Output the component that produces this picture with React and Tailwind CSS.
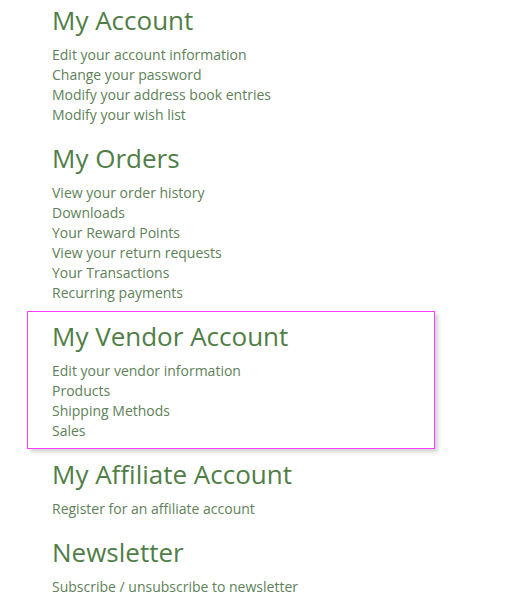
import React from 'react';

const sections = [
  {
    title: 'My Account',
    links: [
      'Edit your account information',
      'Change your password',
      'Modify your address book entries',
      'Modify your wish list',
    ],
  },
  {
    title: 'My Orders',
    links: [
      'View your order history',
      'Downloads',
      'Your Reward Points',
      'View your return requests',
      'Your Transactions',
      'Recurring payments',
    ],
  },
  {
    title: 'My Vendor Account',
    highlight: true,
    links: ['Edit your vendor information', 'Products', 'Shipping Methods', 'Sales'],
  },
  {
    title: 'My Affiliate Account',
    links: ['Register for an affiliate account'],
  },
  {
    title: 'Newsletter',
    links: ['Subscribe / unsubscribe to newsletter'],
  },
];

const Section = ({ section, first }) => (
  <div
    className={
      'w-[408px] pl-[24px] pb-[7px] border ' +
      (first ? 'pt-[3px] ' : 'pt-[8px] ') +
      (section.highlight
        ? 'border-[#ff3dff] shadow-[3px_3px_4px_rgba(0,0,0,0.18)]'
        : 'border-transparent')
    }
  >
    <h2 className="text-[26px] leading-[32px] font-normal text-[#507e46] mb-[9px]">
      {section.title}
    </h2>
    <ul>
      {section.links.map((link) => (
        <li key={link} className="text-[14px] leading-[20px] text-[#608159]">
          <a href="#">{link}</a>
        </li>
      ))}
    </ul>
  </div>
);

const App = () => {
  return (
    <div
      className="min-h-[616px] w-[510px] bg-white pl-[27px]"
      style={{ fontFamily: '"Open Sans", sans-serif' }}
    >
      {sections.map((section, i) => (
        <Section key={section.title} section={section} first={i === 0} />
      ))}
    </div>
  );
};

export default App;
